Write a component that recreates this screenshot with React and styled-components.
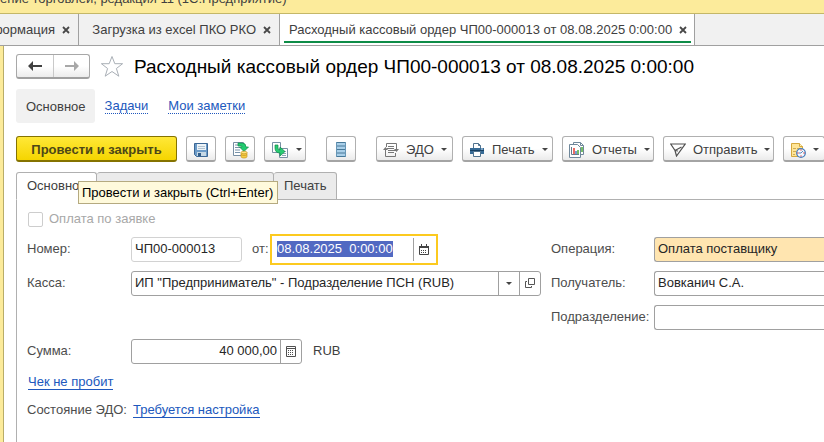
import React, { useEffect, useRef } from "react";
import styled, { createGlobalStyle, css } from "styled-components";

const GlobalStyle = createGlobalStyle`
  * {
    box-sizing: border-box;
  }
  body {
    margin: 0;
    background: #fff;
    overflow: hidden;
  }
  body, button, input {
    font-family: "Liberation Sans", Arial, sans-serif;
    font-size: 13px;
    line-height: 16px;
    color: #404040;
  }
  svg {
    flex: none;
  }
`;

const Page = styled.div`
  display: flex;
  flex-direction: column;
  min-height: 100vh;
`;

const TitleBar = styled.header`
  display: flex;
  align-items: flex-end;
  height: 14px;
  padding-bottom: 6px;
  overflow: hidden;
  white-space: nowrap;
  background: #fceb9b;
  border-bottom: 1px solid #c4b768;
`;

const WindowTabs = styled.nav`
  display: flex;
  height: 32px;
  background: #f1f1f1;
  border-bottom: 1px solid #a0a0a0;
`;

const WindowTab = styled.div`
  display: flex;
  align-items: center;
  justify-content: flex-end;
  flex: none;
  width: ${({ $width }) => $width};
  padding: 0 8px;
  overflow: hidden;
  white-space: nowrap;
  border-right: 1px solid #a0a0a0;
  ${({ $active }) =>
    $active &&
    css`
      padding: 0 3px 2px 4px;
      background: #fff;
    `}
`;

const TabCaption = styled.span`
  display: flex;
  align-items: center;
  gap: 7px;
  height: 100%;
  ${({ $active }) =>
    $active &&
    css`
      padding: 4px 4px 0 5px;
      border-bottom: 2px solid #0e8c47;
    `}
`;

const CloseButton = styled.button`
  display: flex;
  padding: 0;
  border: 0;
  background: none;
`;

const Frame = styled.main`
  flex: 1;
  display: flex;
  flex-direction: column;
  padding: 8px 0 0 12px;
  border-left: 1px solid #b9ad68;
  box-shadow: -3px 0 0 #fceb9b;
  margin-left: 3px;
`;

const Heading = styled.div`
  display: flex;
  align-items: center;
  height: 25px;
`;

const NavButtons = styled.div`
  display: flex;
  border: 1px solid #a8a8a8;
  border-bottom: 2px solid #a0a0a0;
  border-radius: 3px;
  background: linear-gradient(#fff 50%, #ececec);
`;

const NavButton = styled.button`
  display: flex;
  align-items: center;
  justify-content: center;
  width: 36px;
  height: 22px;
  padding: 0;
  border: 0;
  background: none;
  & + & {
    border-left: 1px solid #c9c9c9;
  }
`;

const StarButton = styled(CloseButton)`
  margin: 0 10px;
`;

const Title = styled.h1`
  margin: 0;
  font-size: 19px;
  font-weight: 400;
  line-height: 24px;
  white-space: nowrap;
  color: #000;
`;

const Sections = styled.nav`
  display: flex;
  align-items: center;
  gap: 20px;
  margin-top: 10px;
`;

const CurrentSection = styled.span`
  margin-right: -10px;
  padding: 10px 9px 8px 10px;
  border-radius: 3px;
  background: #f1f1f1;
`;

const Link = styled.a`
  color: #2058bd;
  text-decoration: none;
  border-bottom: 1px ${({ $dotted }) => ($dotted ? "dotted" : "solid")} #2058bd;
  line-height: 14px;
`;

const Toolbar = styled.div`
  display: flex;
  gap: 9px;
  margin-top: 13px;
  overflow: hidden;
`;

const ToolGroup = styled.div`
  display: flex;
  flex: none;
  gap: 9px;
  margin-right: ${({ $spaced }) => ($spaced ? "11px" : "0")};
`;

const ToolButton = styled.button`
  display: flex;
  align-items: center;
  justify-content: ${({ $menu }) => ($menu ? "flex-start" : "center")};
  flex: none;
  gap: 7px;
  width: ${({ $width }) => $width || "30px"};
  height: 26px;
  padding: 2px 6px 0;
  border: 1px solid #b0b0b0;
  border-bottom: 2px solid #a4a4a4;
  border-radius: 3px;
  background: linear-gradient(#fff 50%, #ebebeb);
  white-space: nowrap;
`;

const MainButton = styled(ToolButton)`
  width: 161px;
  border: 1px solid #857300;
  border-bottom: 2px solid #857300;
  background: linear-gradient(#ffe838, #f5d500);
  font-weight: 700;
  color: #4d4717;
`;

const Caret = styled.span`
  width: 0;
  margin-left: ${({ $centered }) => ($centered ? "0" : "auto")};
  border: 3px solid transparent;
  border-top-color: #444;
  border-bottom: 0;
`;

const Pages = styled.div`
  position: relative;
  display: flex;
  margin-top: 10px;
`;

const PageTab = styled.button`
  width: ${({ $width }) => $width};
  height: 28px;
  padding: 0 10px;
  border: 1px solid #b0b0b0;
  border-left-width: ${({ $active }) => ($active ? "1px" : "0")};
  border-bottom-color: ${({ $active }) => ($active ? "#fff" : "#b0b0b0")};
  border-radius: 3px 3px 0 0;
  background: ${({ $active }) => ($active ? "#fff" : "#ebebeb")};
  text-align: left;
  white-space: nowrap;
`;

const PagesLine = styled.span`
  flex: 1;
  border-bottom: 1px solid #b0b0b0;
`;

const Tooltip = styled.div`
  position: absolute;
  top: 9px;
  left: 62px;
  padding: 3px 4px 2px 3px;
  border: 1px solid #b5aa80;
  background: #fffadc;
  white-space: nowrap;
  color: #000;
`;

const Panel = styled.section`
  flex: 1;
  padding: 11px 0 0 10px;
  border-left: 1px solid #b0b0b0;
`;

const CheckLabel = styled.label`
  display: flex;
  align-items: center;
  gap: 6px;
  color: #a8a8a8;
`;

const Checkbox = styled.input`
  appearance: none;
  width: 15px;
  height: 15px;
  margin: 0 0 0 1px;
  border: 1px solid #cdcdcd;
  border-radius: 2px;
  background: #fff;
`;

const Columns = styled.div`
  display: grid;
  grid-template-columns: minmax(0, 514px) minmax(0, 1fr);
  column-gap: 10px;
  margin-top: 5px;
`;

const Column = styled.div`
  display: flex;
  flex-direction: column;
`;

const Row = styled.div`
  display: flex;
  align-items: center;
  height: 34px;
`;

const Label = styled.label`
  flex: none;
  width: ${({ $width }) => $width || "104px"};
  white-space: nowrap;
  color: #4d4d4d;
`;

const Field = styled.div`
  display: flex;
  flex: ${({ $width }) => ($width ? `0 0 ${$width}` : "1")};
  height: 25px;
  border: 1px solid ${({ $readOnly }) => ($readOnly ? "#d2d2d2" : "#a0a0a0")};
  border-radius: 3px;
  background: ${({ $accent }) => ($accent ? "#ffe5b0" : "#fff")};
  overflow: hidden;
  ${({ $open }) =>
    $open &&
    css`
      border-right: 0;
      border-radius: 3px 0 0 3px;
    `}
`;

const FocusedField = styled(Field)`
  height: 31px;
  padding: 2px;
  border: 2px solid #fcca1f;
  border-radius: 0;
`;

const Input = styled.input`
  flex: 1;
  min-width: 0;
  padding: 0 3px;
  border: 0;
  outline: 0;
  background: transparent;
  text-align: ${({ $right }) => ($right ? "right" : "left")};
  color: #262626;
  &::selection {
    background: #5169c2;
    color: #fff;
  }
`;

const FieldButton = styled.button`
  display: flex;
  align-items: center;
  justify-content: center;
  flex: none;
  width: 21px;
  padding: 0;
  border: 0;
  border-left: 1px solid #a0a0a0;
  background: none;
`;

const Middle = styled(Label)`
  margin-left: 10px;
`;

const Currency = styled.span`
  margin-left: 11px;
`;

const LinkRow = styled.div`
  display: flex;
  align-items: center;
  height: 28px;
  padding-left: ${({ $indent }) => ($indent ? "1px" : "0")};
`;

const CloseIcon = () => (
  <svg width="8" height="8" viewBox="0 0 8 8" stroke="#484848" strokeWidth="1.8">
    <path d="M1 1l6 6M7 1l-6 6" />
  </svg>
);

const ArrowIcon = ({ forward }) => (
  <svg width="14" height="10" viewBox="0 0 14 10">
    {forward ? (
      <path d="M14 5L9 0v4H0v2h9v4z" fill="#a8a8a8" />
    ) : (
      <path d="M0 5l5-5v4h9v2H5v4z" fill="#404040" />
    )}
  </svg>
);

const StarIcon = () => (
  <svg width="24" height="23" viewBox="0 0 24 23" fill="#fff" stroke="#a9afb6">
    <path d="M12 1.5l2.8 7.2h7.8l-6.2 4.8 2.4 7.7-6.8-4.7-6.8 4.7 2.4-7.7-6.2-4.8h7.8z" />
  </svg>
);

const SaveIcon = () => (
  <svg width="16" height="16" viewBox="0 0 16 16">
    <path d="M1.5 1.5h13v13h-11l-2-2z" fill="#6c9bc8" stroke="#3c6795" />
    <path d="M4 2h9v6H4z" fill="#eef4f8" />
    <path d="M5 4.5h7M5 6.5h7" stroke="#b2c3d1" />
    <path d="M4 10h9v4H4z" fill="#c6d8e5" />
    <path d="M5 11h3v3H5z" fill="#315c88" />
  </svg>
);

const PostIcon = () => (
  <svg width="18" height="18" viewBox="0 0 18 18">
    <path d="M2.5 1.5h10v13h-10z" fill="#fff" stroke="#768ea3" />
    <path d="M4 4h4M4 6.5h5M4 9h5M4 11.5h5" stroke="#7893aa" />
    <path d="M7 2h4q4 0 4 4h2.5L13 10.5 8.5 6H11q0-1-1-1H7z" fill="#22cb70" stroke="#128d4b" strokeWidth=".7" />
    <path d="M10 11.5v4c0 2 6 2 6 0v-4z" fill="#f5cd43" stroke="#c79524" strokeWidth=".7" />
    <ellipse cx="13" cy="11.5" rx="3" ry="1.3" fill="#ffe580" stroke="#c79524" strokeWidth=".7" />
    <path d="M10 13.5c1 1.3 5 1.3 6 0" fill="none" stroke="#c79524" strokeWidth=".7" />
  </svg>
);

const CreateFromIcon = () => (
  <svg width="18" height="18" viewBox="0 0 18 18">
    <path d="M1.5 1.5h8v10h-8z" fill="#fff" stroke="#7890a4" />
    <path d="M8.5 7.5h8v9h-8z" fill="#fff" stroke="#7890a4" />
    <path d="M11 10.5h4M12 12.5h3M11 14.5h4" stroke="#8da4b5" />
    <path d="M4 4h3v3q0 2 2 2V6l5 4.5L9 15v-3Q4 12 4 7z" fill="#28ca72" stroke="#0f8a48" strokeWidth=".7" />
  </svg>
);

const RegisterIcon = () => (
  <svg width="10" height="15" viewBox="0 0 10 15">
    <path d="M0 0h10v15H0z" fill="#a9cfe9" />
    <path d="M0 .5h10M0 4h10M0 7.5h10M0 11h10M0 14.5h10" stroke="#487999" />
    <path d="M.5 0v15M9.5 0v15" stroke="#6796b5" />
  </svg>
);

const EdoIcon = () => (
  <svg width="16" height="16" viewBox="0 0 16 16" fill="none" stroke="#777">
    <path d="M3.500 5V1.500h10V4M2.500 11v3.500h10V11" />
    <path d="M5 4.500h6M4 6.500h7M5 8.500h7M5 10.500h6" />
    <path d="M2.500 11V7.500H4M13.500 4v4.500H12" />
    <path d="M0 8l2.500-3L5 8zM11 7l2.500 3L16 7z" fill="#777" stroke="none" />
  </svg>
);

const PrintIcon = () => (
  <svg width="16" height="16" viewBox="0 0 16 16">
    <path d="M4.500 6V1.500h5l2 2V6" fill="#fff" stroke="#51738f" />
    <path d="M9.500 1.500v2h2" fill="none" stroke="#51738f" />
    <path d="M1 6h14v6H1z" fill="#376b96" />
    <path d="M1 8.500h14" stroke="#173f61" />
    <path d="M4.500 9.500h7v5h-7z" fill="#fff" stroke="#51738f" />
    <path d="M12 7h2" stroke="#c5dbed" />
  </svg>
);

const ReportIcon = () => (
  <svg width="16" height="16" viewBox="0 0 16 16">
    <path d="M4.500 3V.5h7l3 3v9H12" fill="#fff" stroke="#70889b" />
    <path d="M11.500.5v3h3" fill="none" stroke="#70889b" />
    <path d="M.5 2.500h8l3 3v10H.5z" fill="#fff" stroke="#70889b" />
    <path d="M2.500 5v7.500H10" fill="none" stroke="#66798a" />
    <path d="M5 6v6" stroke="#e33b31" strokeWidth="1.500" />
    <path d="M7 9v3" stroke="#497ec0" strokeWidth="1.500" />
    <path d="M9 8v4M13 5v5" stroke="#4aaa37" strokeWidth="1.500" />
  </svg>
);

const SendIcon = () => (
  <svg width="16" height="14" viewBox="0 0 16 14" fill="none" stroke="#505050" strokeWidth="1.200">
    <path d="M.7 1h14.500L6.500 13 5 7.500zM5 7.500L11.500 4M5 7.500l3 .5M.7 1L5 7.500" />
  </svg>
);

const ScheduleIcon = () => (
  <svg width="16" height="16" viewBox="0 0 16 16">
    <path d="M1.500 1.500h8l3 3v10h-11z" fill="#ffe597" stroke="#d4a83e" />
    <path d="M9.500 1.500v3h3" fill="#fff2bd" stroke="#d4a83e" />
    <path d="M3 6.500h3M7 6.500h3M3 9.500h3M3 12.500h2" stroke="#cfac54" />
    <circle cx="11" cy="11" r="4.300" fill="#f5faff" stroke="#487fbd" strokeWidth="1.300" />
    <path d="M11 7.500v1M11 13.500v1M7.500 11h1M13.500 11h1" stroke="#cd313b" strokeWidth="1.300" />
    <path d="M11 11l2-2M11 11H9" stroke="#5989bb" />
  </svg>
);

const CalendarIcon = () => (
  <svg width="10" height="11" viewBox="0 0 10 11">
    <path d="M.5 2.500h9v8h-9z" fill="#fff" stroke="#444" />
    <path d="M0 2h10v2H0zM2 0h1v2H2zM7 0h1v2H7z" fill="#444" />
    <path d="M2 6.500h6M2 8.500h6" stroke="#444" strokeDasharray="1 1" />
  </svg>
);

const OpenIcon = () => (
  <svg width="10" height="10" viewBox="0 0 10 10" fill="none" stroke="#555">
    <path d="M3.500.5h6v6h-6zM2 3.500H.5v6h6V8" />
  </svg>
);

const CalculatorIcon = () => (
  <svg width="10" height="11" viewBox="0 0 10 11" fill="none" stroke="#505050">
    <path d="M.5.5h9v10h-9zM1 2.500h8" />
    <path d="M2 4.500h6M2 6.500h6M2 8.500h6" strokeDasharray="1 1" />
  </svg>
);

const menuButtons = [
  { label: "ЭДО", icon: <EdoIcon />, width: "77px" },
  { label: "Печать", icon: <PrintIcon />, width: "91px" },
  { label: "Отчеты", icon: <ReportIcon />, width: "92px" },
  { label: "Отправить", icon: <SendIcon />, width: "111px" },
  { label: "", icon: <ScheduleIcon />, width: "42px" },
];

const App = () => {
  const dateRef = useRef(null);

  useEffect(() => {
    dateRef.current.focus();
    dateRef.current.select();
  }, []);

  return (
    <>
      <GlobalStyle />
      <Page>
        <TitleBar>ение торговлей, редакция 11 (1С:Предприятие)</TitleBar>
        <WindowTabs>
          <WindowTab $width="79px">
            <TabCaption>
              формация
              <CloseButton aria-label="Закрыть"><CloseIcon /></CloseButton>
            </TabCaption>
          </WindowTab>
          <WindowTab $width="201px">
            <TabCaption>
              Загрузка из excel ПКО РКО
              <CloseButton aria-label="Закрыть"><CloseIcon /></CloseButton>
            </TabCaption>
          </WindowTab>
          <WindowTab $active>
            <TabCaption $active>
              Расходный кассовый ордер ЧП00-000013 от 08.08.2025 0:00:00
              <CloseButton aria-label="Закрыть"><CloseIcon /></CloseButton>
            </TabCaption>
          </WindowTab>
        </WindowTabs>

        <Frame>
          <Heading>
            <NavButtons>
              <NavButton aria-label="Назад"><ArrowIcon /></NavButton>
              <NavButton aria-label="Вперед"><ArrowIcon forward /></NavButton>
            </NavButtons>
            <StarButton aria-label="В избранное"><StarIcon /></StarButton>
            <Title>Расходный кассовый ордер ЧП00-000013 от 08.08.2025 0:00:00</Title>
          </Heading>

          <Sections>
            <CurrentSection>Основное</CurrentSection>
            <Link href="#tasks" $dotted>Задачи</Link>
            <Link href="#notes" $dotted>Мои заметки</Link>
          </Sections>

          <Toolbar>
            <ToolGroup $spaced>
              <MainButton>Провести и закрыть</MainButton>
              <ToolButton aria-label="Записать"><SaveIcon /></ToolButton>
              <ToolButton aria-label="Провести"><PostIcon /></ToolButton>
              <ToolButton aria-label="Создать на основании" $menu $width="42px">
                <CreateFromIcon />
                <Caret />
              </ToolButton>
            </ToolGroup>
            <ToolGroup $spaced>
              <ToolButton aria-label="Движения документа"><RegisterIcon /></ToolButton>
            </ToolGroup>
            <ToolGroup>
              {menuButtons.map(({ label, icon, width }) => (
                <ToolButton key={width} aria-label={label || "Напоминание"} $menu $width={width}>
                  {icon}
                  {label}
                  <Caret />
                </ToolButton>
              ))}
            </ToolGroup>
          </Toolbar>

          <Pages>
            <PageTab $active $width="81px">Основное</PageTab>
            <PageTab $width="177px">Расшифровка платежа (1)</PageTab>
            <PageTab $width="63px">Печать</PageTab>
            <PagesLine />
            <Tooltip role="tooltip">Провести и закрыть (Ctrl+Enter)</Tooltip>
          </Pages>

          <Panel>
            <CheckLabel>
              <Checkbox type="checkbox" disabled />
              Оплата по заявке
            </CheckLabel>

            <Columns>
              <Column>
                <Row>
                  <Label htmlFor="number">Номер:</Label>
                  <Field $readOnly $width="111px">
                    <Input id="number" defaultValue="ЧП00-000013" readOnly />
                  </Field>
                  <Middle htmlFor="date" $width="18px">от:</Middle>
                  <FocusedField $width="168px">
                    <Input id="date" ref={dateRef} defaultValue="08.08.2025  0:00:00" />
                    <FieldButton aria-label="Выбрать дату"><CalendarIcon /></FieldButton>
                  </FocusedField>
                </Row>
                <Row>
                  <Label htmlFor="cash">Касса:</Label>
                  <Field>
                    <Input id="cash" defaultValue={'ИП "Предприниматель" - Подразделение ПСН (RUB)'} />
                    <FieldButton aria-label="Выбрать"><Caret $centered /></FieldButton>
                    <FieldButton aria-label="Открыть"><OpenIcon /></FieldButton>
                  </Field>
                </Row>
                <Row />
                <Row>
                  <Label htmlFor="sum">Сумма:</Label>
                  <Field $width="171px">
                    <Input id="sum" $right defaultValue="40 000,00" />
                    <FieldButton aria-label="Калькулятор"><CalculatorIcon /></FieldButton>
                  </Field>
                  <Currency>RUB</Currency>
                </Row>
              </Column>
              <Column>
                <Row>
                  <Label htmlFor="operation" $width="103px">Операция:</Label>
                  <Field $accent $open>
                    <Input id="operation" defaultValue="Оплата поставщику" />
                  </Field>
                </Row>
                <Row>
                  <Label htmlFor="receiver" $width="103px">Получатель:</Label>
                  <Field $open>
                    <Input id="receiver" defaultValue="Вовканич С.А." />
                  </Field>
                </Row>
                <Row>
                  <Label htmlFor="department" $width="103px">Подразделение:</Label>
                  <Field $open>
                    <Input id="department" />
                  </Field>
                </Row>
              </Column>
            </Columns>

            <LinkRow $indent>
              <Link href="#receipt">Чек не пробит</Link>
            </LinkRow>
            <LinkRow>
              <Label as="span" $width="106px">Состояние ЭДО:</Label>
              <Link href="#edo">Требуется настройка</Link>
            </LinkRow>
          </Panel>
        </Frame>
      </Page>
    </>
  );
};

export default App;
